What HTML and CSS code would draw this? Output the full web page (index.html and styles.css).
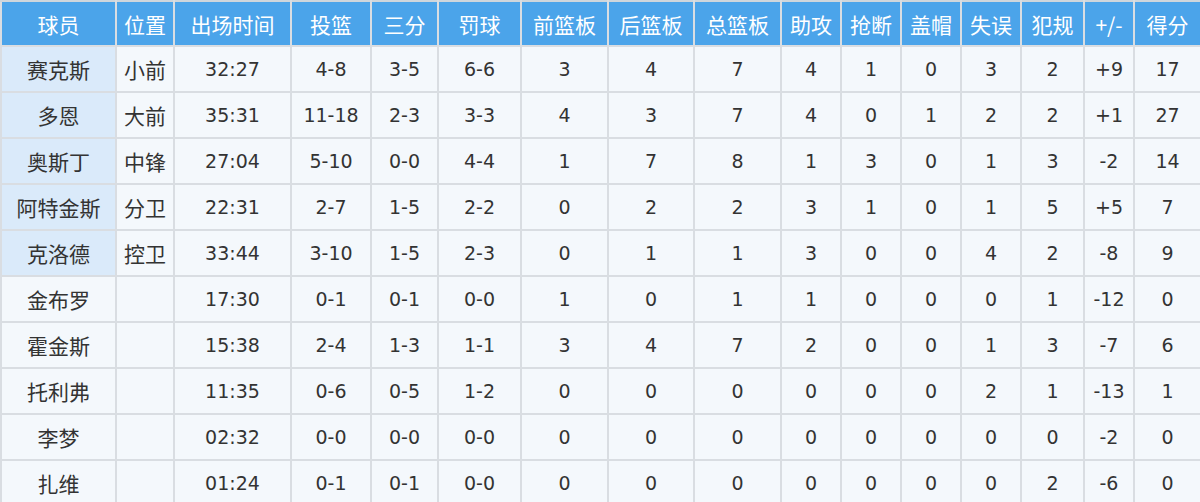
FILE: index.html
```html
<!DOCTYPE html>
<html lang="zh">
<head>
<meta charset="utf-8">
<link rel="stylesheet" href="styles.css">
</head>
<body>
<table class="box">
<colgroup>
<col style="width:115px"><col style="width:58px"><col style="width:117px"><col style="width:80px"><col style="width:67px"><col style="width:83px"><col style="width:87px"><col style="width:86px"><col style="width:87px"><col style="width:60px"><col style="width:60px"><col style="width:60px"><col style="width:60px"><col style="width:63px"><col style="width:50px"><col style="width:67px">
</colgroup>
<thead>
<tr><th>球员</th><th>位置</th><th>出场时间</th><th>投篮</th><th>三分</th><th>罚球</th><th>前篮板</th><th>后篮板</th><th>总篮板</th><th>助攻</th><th>抢断</th><th>盖帽</th><th>失误</th><th>犯规</th><th>+/-</th><th>得分</th></tr>
</thead>
<tbody>
<tr><td class="name starter">赛克斯</td><td class="pos">小前</td><td>32:27</td><td>4-8</td><td>3-5</td><td>6-6</td><td>3</td><td>4</td><td>7</td><td>4</td><td>1</td><td>0</td><td>3</td><td>2</td><td>+9</td><td>17</td></tr>
<tr><td class="name starter">多恩</td><td class="pos">大前</td><td>35:31</td><td>11-18</td><td>2-3</td><td>3-3</td><td>4</td><td>3</td><td>7</td><td>4</td><td>0</td><td>1</td><td>2</td><td>2</td><td>+1</td><td>27</td></tr>
<tr><td class="name starter">奥斯丁</td><td class="pos">中锋</td><td>27:04</td><td>5-10</td><td>0-0</td><td>4-4</td><td>1</td><td>7</td><td>8</td><td>1</td><td>3</td><td>0</td><td>1</td><td>3</td><td>-2</td><td>14</td></tr>
<tr><td class="name starter">阿特金斯</td><td class="pos">分卫</td><td>22:31</td><td>2-7</td><td>1-5</td><td>2-2</td><td>0</td><td>2</td><td>2</td><td>3</td><td>1</td><td>0</td><td>1</td><td>5</td><td>+5</td><td>7</td></tr>
<tr><td class="name starter">克洛德</td><td class="pos">控卫</td><td>33:44</td><td>3-10</td><td>1-5</td><td>2-3</td><td>0</td><td>1</td><td>1</td><td>3</td><td>0</td><td>0</td><td>4</td><td>2</td><td>-8</td><td>9</td></tr>
<tr><td class="name">金布罗</td><td class="pos"></td><td>17:30</td><td>0-1</td><td>0-1</td><td>0-0</td><td>1</td><td>0</td><td>1</td><td>1</td><td>0</td><td>0</td><td>0</td><td>1</td><td>-12</td><td>0</td></tr>
<tr><td class="name">霍金斯</td><td class="pos"></td><td>15:38</td><td>2-4</td><td>1-3</td><td>1-1</td><td>3</td><td>4</td><td>7</td><td>2</td><td>0</td><td>0</td><td>1</td><td>3</td><td>-7</td><td>6</td></tr>
<tr><td class="name">托利弗</td><td class="pos"></td><td>11:35</td><td>0-6</td><td>0-5</td><td>1-2</td><td>0</td><td>0</td><td>0</td><td>0</td><td>0</td><td>0</td><td>2</td><td>1</td><td>-13</td><td>1</td></tr>
<tr><td class="name">李梦</td><td class="pos"></td><td>02:32</td><td>0-0</td><td>0-0</td><td>0-0</td><td>0</td><td>0</td><td>0</td><td>0</td><td>0</td><td>0</td><td>0</td><td>0</td><td>-2</td><td>0</td></tr>
<tr><td class="name">扎维</td><td class="pos"></td><td>01:24</td><td>0-1</td><td>0-1</td><td>0-0</td><td>0</td><td>0</td><td>0</td><td>0</td><td>0</td><td>0</td><td>0</td><td>2</td><td>-6</td><td>0</td></tr>
</tbody>
</table>
</body>
</html>
```

FILE: styles.css
```css
html, body {
  margin: 0;
  padding: 0;
  background: #ffffff;
}

.box {
  width: 1200px;
  table-layout: fixed;
  border-collapse: collapse;
  font-family: "DejaVu Sans", "Noto Sans CJK SC", sans-serif;
  font-size: 19px;
  color: #333333;
}

.box th {
  height: 43px;
  padding: 0;
  background: #4ba4ea;
  color: #ffffff;
  font-family: "Noto Sans CJK SC", sans-serif;
  font-weight: normal;
  font-size: 21px;
  text-align: center;
  border: 2px solid #d9dde2;
  border-top-color: #cfd6dc;
}

.box td {
  height: 44px;
  padding: 0;
  background: #f4f8fc;
  text-align: center;
  border: 2px solid #d9dde2;
  white-space: nowrap;
  overflow: hidden;
}

.box td.name,
.box td.pos {
  font-family: "Noto Sans CJK SC", sans-serif;
  font-size: 21px;
}

.box td.starter {
  background: #daeafa;
}
```
